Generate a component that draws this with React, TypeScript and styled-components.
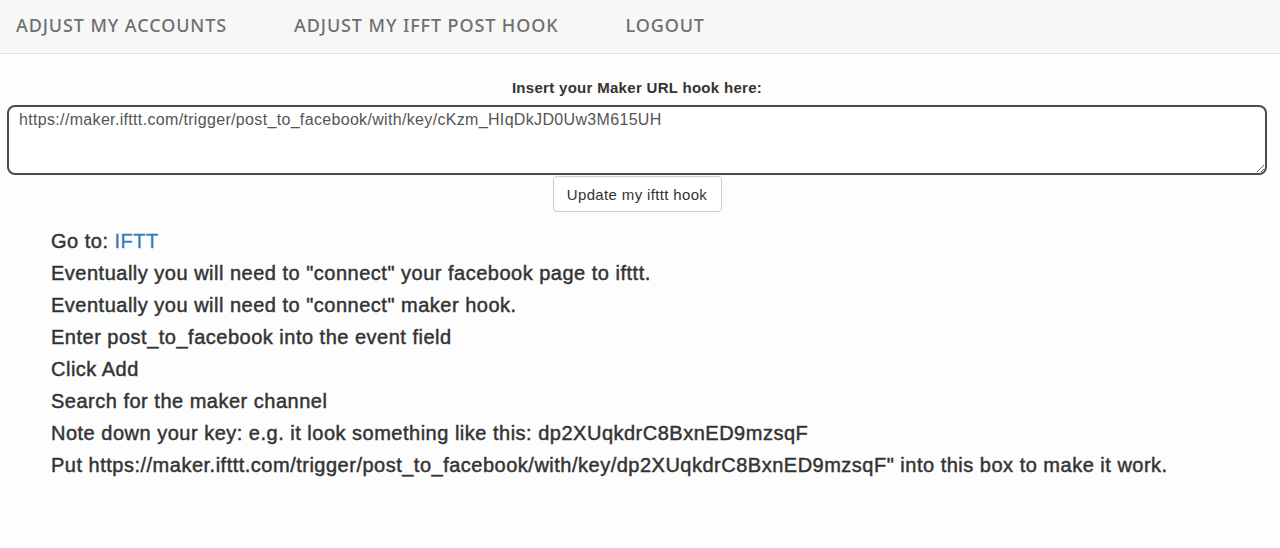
import React from "react";
import styled, { createGlobalStyle } from "styled-components";

const Global = createGlobalStyle`
  html, body { margin: 0; padding: 0; background: #fdfdfd; }
  body { font-family: "Liberation Sans", Arial, sans-serif; color: #333; }
  * { box-sizing: border-box; }
`;

const Nav = styled.nav`
  height: 54px;
  background: #f7f7f7;
  border-bottom: 1px solid #e2e2e2;
  display: flex;
  align-items: center;
  gap: 67px;
  padding: 0 0 4px 16px;
`;

const NavItem = styled.a`
  font-family: "Noto Sans", "Open Sans", sans-serif;
  font-size: 18px;
  font-weight: 500;
  color: #6f6f6f;
  text-transform: uppercase;
  text-decoration: none;
  letter-spacing: 0.9px;
`;

const Form = styled.form`
  display: flex;
  flex-direction: column;
  align-items: center;
  padding: 25px 13px 0 7px;
`;

const Label = styled.label`
  font-size: 15px;
  font-weight: 700;
  color: #333;
  letter-spacing: 0.3px;
  margin-bottom: 9px;
`;

const Area = styled.textarea`
  display: block;
  width: 100%;
  height: 70px;
  border: 2px solid #4a4a4f;
  border-radius: 8px;
  padding: 4px 10px;
  font-family: "Liberation Sans", Arial, sans-serif;
  font-size: 16px;
  letter-spacing: 0.33px;
  color: #555;
  background: #fff;
  resize: vertical;
  outline: none;
`;

const Button = styled.button`
  margin-top: 1px;
  height: 36px;
  width: 169px;
  padding: 0;
  background: #fff;
  border: 1px solid #ccc;
  border-radius: 4px;
  font-family: "Liberation Sans", Arial, sans-serif;
  font-size: 15px;
  letter-spacing: 0.35px;
  color: #333;
`;

const Steps = styled.div`
  padding: 13px 0 0 51px;
  display: flex;
  flex-direction: column;
`;

const Step = styled.div`
  font-size: 20px;
  line-height: 32px;
  letter-spacing: 0.5px;
  color: #333;
  -webkit-text-stroke: 0.45px #333;
`;

const Link = styled.a`
  color: #337ab7;
  text-decoration: none;
  -webkit-text-stroke: 0.3px #337ab7;
`;

export default function App() {
  return (
    <>
      <Global />
      <Nav>
        <NavItem href="#">Adjust my accounts</NavItem>
        <NavItem href="#">Adjust my IFFT post hook</NavItem>
        <NavItem href="#">Logout</NavItem>
      </Nav>
      <Form onSubmit={(e) => e.preventDefault()}>
        <Label>Insert your Maker URL hook here:</Label>
        <Area defaultValue="https://maker.ifttt.com/trigger/post_to_facebook/with/key/cKzm_HIqDkJD0Uw3M615UH" />
        <Button type="submit">Update my ifttt hook</Button>
      </Form>
      <Steps>
        <Step>Go to: <Link href="#">IFTT</Link></Step>
        <Step>Eventually you will need to "connect" your facebook page to ifttt.</Step>
        <Step>Eventually you will need to "connect" maker hook.</Step>
        <Step>Enter post_to_facebook into the event field</Step>
        <Step>Click Add</Step>
        <Step>Search for the maker channel</Step>
        <Step>Note down your key: e.g. it look something like this: dp2XUqkdrC8BxnED9mzsqF</Step>
        <Step>Put https://maker.ifttt.com/trigger/post_to_facebook/with/key/dp2XUqkdrC8BxnED9mzsqF" into this box to make it work.</Step>
      </Steps>
    </>
  );
}
